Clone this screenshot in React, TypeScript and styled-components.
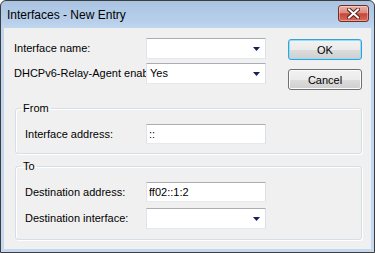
import React from 'react'
import styled, { createGlobalStyle } from 'styled-components'

const GlobalStyle = createGlobalStyle`
  html, body {
    margin: 0;
    padding: 0;
    background: #ffffff;
  }
  body {
    font-family: "Liberation Sans", Arial, sans-serif;
    font-size: 11px;
    color: #000;
  }
`

const Window = styled.div`
  width: 375px;
  height: 253px;
  box-sizing: border-box;
  border: 1px solid #3d3d3d;
  border-radius: 6px 6px 0 0;
  background: linear-gradient(#a9c4e2 0px, #b7cfea 20px, #c1d6ee 27px, #c4d8ef 100%);
  padding: 0 3px 3px;
  display: flex;
  flex-direction: column;
  overflow: hidden;
`

const TitleBar = styled.div`
  height: 27px;
  flex: none;
  display: flex;
  align-items: flex-start;
  justify-content: space-between;
  padding: 0 2px 0 3px;
`

const Title = styled.span`
  font-size: 12px;
  line-height: 14px;
  margin-top: 7px;
  color: #000;
`

const CloseButton = styled.div`
  width: 29px;
  height: 15px;
  margin-top: 4px;
  border: 1px solid #7a2a22;
  border-radius: 3px;
  background: linear-gradient(#eab2a8 0%, #dc8a7c 45%, #c5463a 52%, #d86a58 100%);
  display: flex;
  align-items: center;
  justify-content: center;
  box-shadow: inset 0 0 0 1px rgba(255, 255, 255, 0.35);
`

const Client = styled.div`
  flex: 1;
  background: #f0f0f0;
  padding: 10px 9px 0 10px;
  display: flex;
  flex-direction: column;
`

const TopSection = styled.div`
  display: flex;
  margin-bottom: 12px;
`

const Fields = styled.div`
  display: flex;
  flex-direction: column;
  gap: 4px;
`

const Row = styled.div<{ $label: number }>`
  display: grid;
  grid-template-columns: ${p => p.$label}px 120px;
  align-items: center;
`

const Label = styled.label`
  white-space: nowrap;
  overflow: hidden;
  line-height: 13px;
`

const TextBox = styled.div<{ $h?: number }>`
  height: ${p => p.$h ?? 20}px;
  box-sizing: border-box;
  background: #fff;
  border: 1px solid;
  border-color: #abadb3 #dbdfe6 #e3e9ef #e2e3ea;
  display: flex;
  align-items: center;
  padding-left: 2px;
  line-height: 13px;
  white-space: nowrap;
`

const ComboBox = styled(TextBox)`
  justify-content: space-between;
  padding: 0 5px 0 3px;
`

const Buttons = styled.div`
  margin-left: 22px;
  margin-top: 1px;
  display: flex;
  flex-direction: column;
  gap: 9px;
`

const Button = styled.button<{ $default?: boolean }>`
  width: 74px;
  height: 21px;
  box-sizing: border-box;
  font: inherit;
  color: #000;
  padding: 0;
  border-radius: 3px;
  border: 1px solid ${p => (p.$default ? '#3c9fd2' : '#707070')};
  background: linear-gradient(#f2f2f2 0%, #ebebeb 50%, #dddddd 51%, #cfcfcf 100%);
  box-shadow: inset 0 0 0 1px ${p => (p.$default ? '#8fe0f8' : '#fcfcfc')};
`

const Group = styled.fieldset<{ $gap?: number }>`
  margin: ${p => p.$gap ?? 0}px 0 0 1px;
  width: 347px;
  box-sizing: border-box;
  border: 1px solid #d5dfe5;
  border-radius: 3px;
  box-shadow: 1px 1px 0 #ffffff, inset 1px 1px 0 #ffffff;
  padding: 9px 9px ${p => (p.$gap ? 10 : 9)}px 9px;
  display: flex;
  flex-direction: column;
  gap: 6px;
`

const Caption = styled.legend`
  line-height: 13px;
  padding: 0 2px;
  margin-left: -4px;
`

const Arrow = () => (
  <svg width="7" height="4" viewBox="0 0 7 4">
    <polygon points="0,0 7,0 3.5,4" fill="#14225a" />
  </svg>
)

const CloseGlyph = () => (
  <svg width="13" height="11" viewBox="0 0 13 11">
    <path d="M2 1.5 L11 9.5 M11 1.5 L2 9.5" stroke="#5a211a" strokeWidth="4" strokeLinecap="square" />
    <path d="M2 1.5 L11 9.5 M11 1.5 L2 9.5" stroke="#ffffff" strokeWidth="2" strokeLinecap="square" />
  </svg>
)

const App: React.FC = () => {
  return (
    <>
      <GlobalStyle />
      <Window>
        <TitleBar>
          <Title>Interfaces - New Entry</Title>
          <CloseButton><CloseGlyph /></CloseButton>
        </TitleBar>
        <Client>
          <TopSection>
            <Fields>
              <Row $label={132}>
                <Label>Interface name:</Label>
                <ComboBox $h={21}><span /><Arrow /></ComboBox>
              </Row>
              <Row $label={132}>
                <Label>DHCPv6-Relay-Agent enabled:</Label>
                <ComboBox $h={21}><span>Yes</span><Arrow /></ComboBox>
              </Row>
            </Fields>
            <Buttons>
              <Button $default>OK</Button>
              <Button>Cancel</Button>
            </Buttons>
          </TopSection>

          <Group>
            <Caption>From</Caption>
            <Row $label={121}>
              <Label>Interface address:</Label>
              <TextBox>::</TextBox>
            </Row>
          </Group>

          <Group $gap={6}>
            <Caption>To</Caption>
            <Row $label={121}>
              <Label>Destination address:</Label>
              <TextBox>ff02::1:2</TextBox>
            </Row>
            <Row $label={121}>
              <Label>Destination interface:</Label>
              <ComboBox $h={21}><span /><Arrow /></ComboBox>
            </Row>
          </Group>
        </Client>
      </Window>
    </>
  )
}

export default App
